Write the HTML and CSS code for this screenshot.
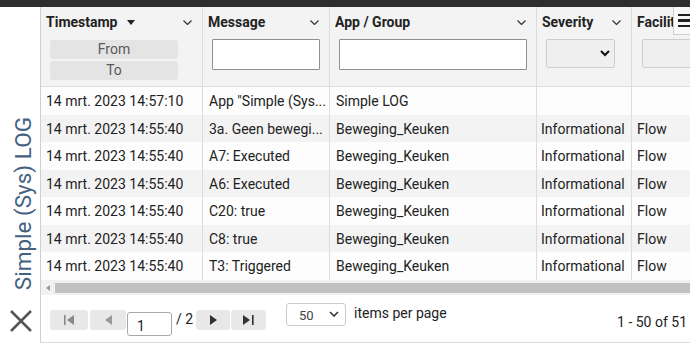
FILE: index.html
```html
<!DOCTYPE html>
<html>
<head>
<meta charset="utf-8">
<link rel="stylesheet" href="styles.css">
</head>
<body>
<div class="topbar"></div>
<div class="main">
  <aside class="sidebar">
    <div class="side-title">Simple (Sys) LOG</div>
    <svg class="close" width="22" height="22" viewBox="0 0 22 22"><path d="M1 1 L21 21 M21 1 L1 21" stroke="#555" stroke-width="2.5" fill="none"/></svg>
  </aside>
  <section class="panel">
    <div class="grid">
      <div class="head">
        <div class="hcell">
          <div class="htitle"><span>Timestamp</span><svg class="sort" width="8" height="5" viewBox="0 0 8 5"><path d="M0 0 H8 L4 5 Z" fill="#222"/></svg><svg class="chev" width="9" height="5" viewBox="0 0 9 5"><path d="M0.5 0.5 L4.5 4.5 L8.5 0.5" stroke="#333" stroke-width="1.2" fill="none"/></svg></div>
          <div class="range"><div class="rbtn">From</div><div class="rbtn">To</div></div>
        </div>
        <div class="hcell">
          <div class="htitle"><span>Message</span><svg class="chev" width="9" height="5" viewBox="0 0 9 5"><path d="M0.5 0.5 L4.5 4.5 L8.5 0.5" stroke="#333" stroke-width="1.2" fill="none"/></svg></div>
          <div class="tinput msg"></div>
        </div>
        <div class="hcell">
          <div class="htitle"><span>App / Group</span><svg class="chev" width="9" height="5" viewBox="0 0 9 5"><path d="M0.5 0.5 L4.5 4.5 L8.5 0.5" stroke="#333" stroke-width="1.2" fill="none"/></svg></div>
          <div class="tinput app"></div>
        </div>
        <div class="hcell">
          <div class="htitle"><span>Severity</span><svg class="chev" width="9" height="5" viewBox="0 0 9 5"><path d="M0.5 0.5 L4.5 4.5 L8.5 0.5" stroke="#333" stroke-width="1.2" fill="none"/></svg></div>
          <div class="sel sev"><svg width="10" height="7" viewBox="0 0 10 7"><path d="M1 1 L5 5 L9 1" stroke="#111" stroke-width="2" fill="none"/></svg></div>
        </div>
        <div class="hcell">
          <div class="htitle"><span>Facilit</span></div>
          <div class="sel fac"></div>
        </div>
      </div>
      <div class="body">
        <div class="row"><div class="cell">14 mrt. 2023 14:57:10</div><div class="cell">App "Simple (Sys...</div><div class="cell">Simple LOG</div><div class="cell"></div><div class="cell"></div></div>
        <div class="row alt"><div class="cell">14 mrt. 2023 14:55:40</div><div class="cell">3a. Geen bewegi...</div><div class="cell">Beweging_Keuken</div><div class="cell">Informational</div><div class="cell">Flow</div></div>
        <div class="row"><div class="cell">14 mrt. 2023 14:55:40</div><div class="cell">A7: Executed</div><div class="cell">Beweging_Keuken</div><div class="cell">Informational</div><div class="cell">Flow</div></div>
        <div class="row alt"><div class="cell">14 mrt. 2023 14:55:40</div><div class="cell">A6: Executed</div><div class="cell">Beweging_Keuken</div><div class="cell">Informational</div><div class="cell">Flow</div></div>
        <div class="row"><div class="cell">14 mrt. 2023 14:55:40</div><div class="cell">C20: true</div><div class="cell">Beweging_Keuken</div><div class="cell">Informational</div><div class="cell">Flow</div></div>
        <div class="row alt"><div class="cell">14 mrt. 2023 14:55:40</div><div class="cell">C8: true</div><div class="cell">Beweging_Keuken</div><div class="cell">Informational</div><div class="cell">Flow</div></div>
        <div class="row"><div class="cell">14 mrt. 2023 14:55:40</div><div class="cell">T3: Triggered</div><div class="cell">Beweging_Keuken</div><div class="cell">Informational</div><div class="cell">Flow</div></div>
      </div>
      <div class="colmenu"><span></span><span></span><span></span></div>
    </div>
    <div class="hscroll">
      <svg class="sarrow" width="4" height="6" viewBox="0 0 4 6"><path d="M4 0 V6 L0 3 Z" fill="#999"/></svg>
      <div class="thumb"></div>
    </div>
    <div class="pager">
      <div class="pbtn first"><svg width="11" height="10" viewBox="0 0 11 10"><rect x="0" y="0" width="1.6" height="10" fill="#888"/><path d="M10 0 V10 L3 5 Z" fill="#888"/></svg></div>
      <div class="pbtn prev"><svg width="7" height="10" viewBox="0 0 7 10"><path d="M7 0 V10 L0 5 Z" fill="#999"/></svg></div>
      <div class="pinput">1</div>
      <div class="ptotal">/ 2</div>
      <div class="pbtn next"><svg width="7" height="10" viewBox="0 0 7 10"><path d="M0 0 V10 L7 5 Z" fill="#333"/></svg></div>
      <div class="pbtn last"><svg width="11" height="10" viewBox="0 0 11 10"><path d="M0 0 V10 L7 5 Z" fill="#333"/><rect x="9" y="0" width="1.6" height="10" fill="#333"/></svg></div>
      <div class="psel"><span>50</span><svg width="10" height="6" viewBox="0 0 10 6"><path d="M1 1 L5 5 L9 1" stroke="#333" stroke-width="1.6" fill="none"/></svg></div>
      <div class="plabel">items per page</div>
      <div class="pinfo">1 - 50 of 51</div>
    </div>
  </section>
</div>
</body>
</html>
```
FILE: styles.css
```css
* { box-sizing: border-box; }
html, body { margin: 0; padding: 0; }
body {
  width: 690px;
  height: 349px;
  overflow: hidden;
  background: #fff;
  font-family: Roboto, "Liberation Sans", sans-serif;
  font-size: 14px;
  color: #222;
}
.topbar { height: 7px; background: #2e2e2e; }
.main { display: flex; height: 336px; }
.sidebar {
  width: 40px;
  flex: none;
  display: flex;
  flex-direction: column;
  align-items: center;
}
.side-title {
  writing-mode: vertical-rl;
  transform: rotate(180deg);
  font-size: 22.5px;
  color: #44617f;
  margin-top: 110px;
  margin-left: 6px;
  line-height: 24px;
  white-space: nowrap;
}
.close { margin-top: 20px; margin-left: 2px; }
.panel {
  flex: 1;
  min-width: 0;
  border-left: 1px solid #cfcfcf;
  border-bottom: 1px solid #dcdcdc;
  display: flex;
  flex-direction: column;
}
.grid { position: relative; overflow: hidden; }
.head, .row {
  display: grid;
  grid-template-columns: 162px 127px 207px 95px 110px;
  width: 701px;
}
.head { background: #f3f3f3; height: 80px; border-bottom: 1px solid #dcdcdc; }
.hcell { border-right: 1px solid #dcdcdc; position: relative; }
.htitle {
  display: flex;
  align-items: center;
  height: 18px;
  margin-top: 6px;
  padding-left: 5px;
  font-weight: 700;
  white-space: nowrap;
}
.sort { margin-left: 9px; margin-top: 1px; }
.chev { position: absolute; right: 10px; top: 13px; }
.range { margin: 9px 0 0 9px; width: 128px; display: flex; flex-direction: column; gap: 2px; }
.rbtn {
  height: 19px;
  background: #e4e4e4;
  border-radius: 3px;
  color: #5a5a5a;
  text-align: center;
  line-height: 19px;
}
.tinput {
  margin-top: 8px;
  height: 31px;
  background: #fff;
  border: 1px solid #8f8f8f;
  border-radius: 1px;
}
.msg { margin-left: 9px; width: 108px; }
.app { margin-left: 9px; width: 188px; }
.sel {
  margin-top: 8px;
  height: 29px;
  background: #efefef;
  border: 1px solid #cdcdcd;
  border-radius: 2px;
  display: flex;
  align-items: center;
  justify-content: flex-end;
  padding-right: 4px;
}
.sev { margin-left: 9px; width: 69px; }
.fac { margin-left: 10px; width: 90px; }
.row { height: 27.5px; background: #fdfdfd; }
.row.alt { background: #f3f3f3; }
.cell {
  border-right: 1px solid #dcdcdc;
  padding: 1px 5px 0 5px;
  line-height: 26.5px;
  white-space: nowrap;
  overflow: hidden;
  color: #222;
}
.row .cell:nth-child(2), .row .cell:nth-child(3) { padding-left: 6px; }
.row .cell:nth-child(4) { padding-left: 4px; }
.colmenu {
  position: absolute;
  top: 0;
  left: 632px;
  width: 20px;
  height: 28px;
  background: #f8f8f8;
  border-left: 1px solid #cfcfcf;
  border-bottom: 1px solid #cfcfcf;
  display: flex;
  flex-direction: column;
  justify-content: center;
  gap: 3px;
  padding-left: 4px;
}
.colmenu span { display: block; height: 2.5px; width: 16px; background: #222; }
.hscroll {
  height: 15px;
  background: #f1f1f1;
  display: flex;
  align-items: flex-start;
}
.sarrow { margin: 5px 0 0 5px; }
.thumb {
  margin: 3px 0 0 5px;
  flex: 1;
  height: 10px;
  background: #c1c1c1;
}
.pager {
  flex: 1;
  display: flex;
  align-items: flex-start;
  padding-left: 9px;
  padding-right: 3px;
}
.pbtn {
  margin-top: 15px;
  height: 20px;
  background: #e8e8e8;
  border-radius: 3px;
  display: flex;
  align-items: center;
  justify-content: center;
}
.first { width: 38px; }
.prev { width: 36px; margin-left: 2px; }
.next { width: 34px; }
.last { width: 35px; margin-left: 1px; }
.pinput {
  margin-top: 17px;
  margin-left: 1px;
  width: 45px;
  height: 24px;
  border: 1px solid #a9a9a9;
  border-radius: 3px;
  background: #fff;
  padding: 4px 0 0 9px;
  line-height: 18px;
}
.ptotal { margin-top: 14px; line-height: 20px; margin-left: 4px; width: 20px; }
.psel {
  margin-top: 8px;
  margin-left: 20px;
  width: 60px;
  height: 23px;
  border: 1px solid #cdcdcd;
  border-radius: 3px;
  background: #fff;
  display: flex;
  align-items: center;
  justify-content: space-between;
  padding: 0 6px 0 12px;
  font-size: 13px;
  color: #444;
}
.psel span { padding-top: 2px; }
.plabel { margin-top: 8px; margin-left: 8px; line-height: 20px; color: #222; }
.pinfo { margin-top: 17px; margin-left: auto; line-height: 20px; color: #222; }
```
